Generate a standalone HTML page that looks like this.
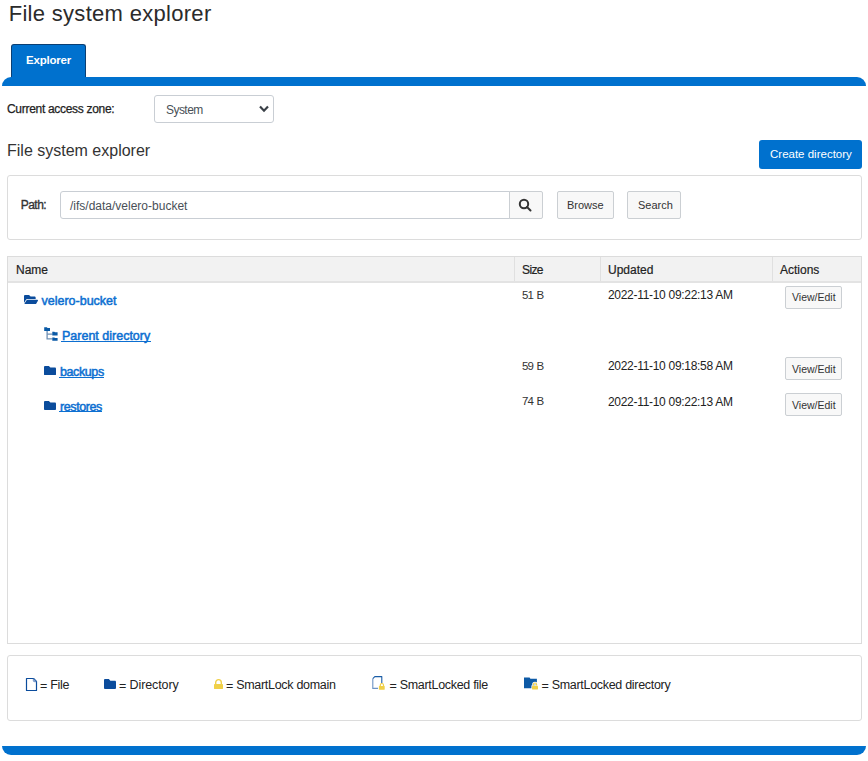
<!DOCTYPE html>
<html><head><meta charset="utf-8">
<style>
*{box-sizing:border-box;margin:0;padding:0}
html,body{width:868px;height:761px;background:#fff;overflow:hidden}
body{position:relative;font-family:"Liberation Sans",sans-serif;color:#212529}
.a{position:absolute;white-space:nowrap;line-height:1}
.bar{position:absolute;background:#0071ce}
.panel{position:absolute;border:1px solid #dcdcdc;border-radius:3px;background:#fff}
.btn{position:absolute;border:1px solid #cbcfd3;border-radius:2px;background:#f8f8f8}
.lnk{color:#0c6fd1;-webkit-text-stroke:0.5px #0c6fd1;font-size:12.5px}
.ic{position:absolute}
</style></head><body>

<div class="a" style="left:8.7px;top:2.5px;font-size:22px;letter-spacing:0.3px;color:#2b2b2b">File system explorer</div>

<!-- tab -->
<div style="position:absolute;left:11px;top:44px;width:75px;height:34px;background:#0071ce;border:1px solid #0b3f73;border-bottom:none;border-radius:3px 3px 0 0"></div>
<div class="a" style="left:26px;top:55px;font-size:11.5px;font-weight:bold;letter-spacing:-0.2px;color:#fff">Explorer</div>
<div class="bar" style="left:2px;top:77px;width:864px;height:9px;border-radius:10px 10px 0 0"></div>

<div class="a" style="left:7px;top:102.8px;font-size:12px;letter-spacing:-0.3px;-webkit-text-stroke:0.25px #222;color:#222">Current access zone:</div>
<div style="position:absolute;left:154px;top:95px;width:120px;height:28px;border:1px solid #c9ced4;border-radius:3px;background:#fff"></div>
<div class="a" style="left:166px;top:104px;font-size:12px;letter-spacing:-0.55px;color:#495057">System</div>
<svg class="ic" style="left:259px;top:105px" width="10" height="8" viewBox="0 0 10 8"><path d="M1 1.5 L5 5.7 L9 1.5" fill="none" stroke="#3a4047" stroke-width="2.2"/></svg>

<div class="a" style="left:7px;top:143px;font-size:16px;color:#333">File system explorer</div>
<div style="position:absolute;left:759px;top:140px;width:103px;height:29px;background:#0071ce;border-radius:3px"></div>
<div class="a" style="left:770px;top:148.5px;font-size:11.5px;color:#fff">Create directory</div>

<!-- path panel -->
<div class="panel" style="left:7px;top:175px;width:855px;height:65px"></div>
<div class="a" style="left:20.7px;top:198.5px;font-size:12px;letter-spacing:-0.5px;-webkit-text-stroke:0.35px #333;color:#333">Path:</div>
<div style="position:absolute;left:60px;top:191px;width:450px;height:28px;border:1px solid #c9ced4;border-radius:3px 0 0 3px;background:#fff"></div>
<div class="a" style="left:70px;top:200px;font-size:12px;color:#495057">/ifs/data/velero-bucket</div>
<div class="btn" style="left:509px;top:191px;width:34px;height:28px;border-radius:0 2px 2px 0"></div>
<svg class="ic" style="left:518px;top:198px" width="14" height="14" viewBox="0 0 14 14"><circle cx="6" cy="6" r="4.2" fill="none" stroke="#333" stroke-width="2"/><path d="M9 9 L12.5 12.5" stroke="#333" stroke-width="2" stroke-linecap="round"/></svg>
<div class="btn" style="left:557px;top:191px;width:57px;height:28px"></div>
<div class="a" style="left:567px;top:199.5px;font-size:11px;color:#333">Browse</div>
<div class="btn" style="left:627px;top:191px;width:54px;height:28px"></div>
<div class="a" style="left:638px;top:199.5px;font-size:11px;color:#333">Search</div>

<!-- table -->
<div class="panel" style="left:7px;top:256px;width:855px;height:388px;border-radius:0"></div>
<div style="position:absolute;left:8px;top:257px;width:853px;height:26px;background:#f2f2f2;border-bottom:2px solid #e3e3e3"></div>
<div style="position:absolute;left:514px;top:257px;width:1px;height:24px;background:#e0e0e0"></div>
<div style="position:absolute;left:600px;top:257px;width:1px;height:24px;background:#e0e0e0"></div>
<div style="position:absolute;left:772px;top:257px;width:1px;height:24px;background:#e0e0e0"></div>
<div class="a" style="left:16px;top:264px;font-size:12px;-webkit-text-stroke:0.2px #222;color:#222">Name</div>
<div class="a" style="left:522px;top:264px;font-size:12px;letter-spacing:-0.6px;-webkit-text-stroke:0.2px #222;color:#222">Size</div>
<div class="a" style="left:608px;top:264px;font-size:12px;-webkit-text-stroke:0.2px #222;color:#222">Updated</div>
<div class="a" style="left:780px;top:264px;font-size:12px;-webkit-text-stroke:0.2px #222;color:#222">Actions</div>


<!-- row1 -->
<svg class="ic" style="left:24px;top:294.5px" width="14" height="9.5" viewBox="0 64 576 384" preserveAspectRatio="none"><path d="M572.694 292.093L500.27 416.248A63.997 63.997 0 0 1 444.989 448H45.025c-18.523 0-30.064-20.093-20.731-36.093l72.424-124.155A64 64 0 0 1 152 256h399.964c18.523 0 30.064 20.093 20.73 36.093zM152 224h328v-48c0-26.51-21.49-48-48-48H272l-64-64H48C21.49 64 0 85.49 0 112v278.046l69.077-118.418C86.214 242.25 117.989 224 152 224z" fill="#0b4c9c"/></svg>
<div class="a lnk" style="left:41.5px;top:295px">velero-bucket</div>
<div class="a" style="left:522px;top:289.6px;font-size:11.5px;letter-spacing:-0.9px;word-spacing:1.2px;color:#333">51 B</div>
<div class="a" style="left:608px;top:288.5px;font-size:12px;letter-spacing:-0.3px;color:#222">2022-11-10 09:22:13 AM</div>
<div class="btn" style="left:785px;top:286px;width:57px;height:22.5px"></div>
<div class="a" style="left:792px;top:292px;font-size:10.5px;color:#333">View/Edit</div>

<!-- row2 parent -->
<svg class="ic" style="left:44px;top:327px" width="14" height="14" viewBox="0 0 14 14">
<path d="M3.1 3.8 V11.9 H8.5 M3.1 7.1 H8.5" fill="none" stroke="#6f90b4" stroke-width="1.3"/>
<path d="M0.2 0.3 H2.8 L3.6 1.1 H6 V4 H0.2 Z" fill="#0a5aa6"/>
<path d="M8.3 4.7 H10.3 L11 5.3 H13.6 V8.6 H8.3 Z" fill="#0a5aa6"/>
<path d="M8.3 10.5 H10.3 L11 11.1 H13.6 V13.8 H8.3 Z" fill="#0a5aa6"/>
</svg>
<div class="a lnk" style="left:62px;top:329.8px">Parent directory</div>
<div style="position:absolute;left:61px;top:340.6px;width:90px;height:1.2px;background:#0c6fd1"></div>

<!-- row3 backups -->
<svg class="ic" style="left:44px;top:365.7px" width="12" height="9.4" viewBox="0 64 512 384" preserveAspectRatio="none"><path d="M464 128H272l-64-64H48C21.49 64 0 85.49 0 112v288c0 26.51 21.49 48 48 48h416c26.51 0 48-21.49 48-48V176c0-26.51-21.49-48-48-48z" fill="#0b4c9c"/></svg>
<div class="a lnk" style="left:60px;top:365.8px;letter-spacing:-0.4px">backups</div>
<div style="position:absolute;left:59px;top:376.6px;width:45px;height:1.2px;background:#0c6fd1"></div>
<div class="a" style="left:522px;top:360.6px;font-size:11.5px;letter-spacing:-0.9px;word-spacing:1.2px;color:#333">59 B</div>
<div class="a" style="left:608px;top:359.5px;font-size:12px;letter-spacing:-0.3px;color:#222">2022-11-10 09:18:58 AM</div>
<div class="btn" style="left:785px;top:357px;width:57px;height:22.5px"></div>
<div class="a" style="left:792px;top:363.5px;font-size:10.5px;color:#333">View/Edit</div>

<!-- row4 restores -->
<svg class="ic" style="left:44px;top:401.3px" width="12" height="9.2" viewBox="0 64 512 384" preserveAspectRatio="none"><path d="M464 128H272l-64-64H48C21.49 64 0 85.49 0 112v288c0 26.51 21.49 48 48 48h416c26.51 0 48-21.49 48-48V176c0-26.51-21.49-48-48-48z" fill="#0b4c9c"/></svg>
<div class="a lnk" style="left:60px;top:400.5px;letter-spacing:-0.4px">restores</div>
<div style="position:absolute;left:59px;top:411.3px;width:43px;height:1.2px;background:#0c6fd1"></div>
<div class="a" style="left:522px;top:396.4px;font-size:11.5px;letter-spacing:-0.9px;word-spacing:1.2px;color:#333">74 B</div>
<div class="a" style="left:608px;top:395.5px;font-size:12px;letter-spacing:-0.3px;color:#222">2022-11-10 09:22:13 AM</div>
<div class="btn" style="left:785px;top:393px;width:57px;height:22.5px"></div>
<div class="a" style="left:792px;top:399.5px;font-size:10.5px;color:#333">View/Edit</div>

<!-- legend -->
<div class="panel" style="left:7px;top:655px;width:855px;height:66px"></div>
<svg class="ic" style="left:25px;top:677px" width="13" height="15" viewBox="0 0 13 15">
<path d="M1.5 1.5 H8.6 L11.5 4.4 V13.5 H1.5 Z" fill="none" stroke="#0b4c9c" stroke-width="1.2" stroke-linejoin="round"/>
<path d="M8.3 1.8 V3.6 Q8.3 4.7 9.4 4.7 H11.3 Z" fill="#8aa6d0" stroke="#5f86bf" stroke-width="0.8"/>
</svg>
<div class="a" style="left:40px;top:678.5px;font-size:12.5px;letter-spacing:-0.3px;color:#222"><span style="position:relative;top:1px">=</span> File</div>

<svg class="ic" style="left:104px;top:679px" width="12" height="10" viewBox="0 64 512 384" preserveAspectRatio="none"><path d="M464 128H272l-64-64H48C21.49 64 0 85.49 0 112v288c0 26.51 21.49 48 48 48h416c26.51 0 48-21.49 48-48V176c0-26.51-21.49-48-48-48z" fill="#0b4c9c"/></svg>
<div class="a" style="left:119px;top:678.5px;font-size:12.5px;letter-spacing:-0.1px;color:#222"><span style="position:relative;top:1px">=</span> Directory</div>

<svg class="ic" style="left:213px;top:678px" width="11" height="12" viewBox="0 0 11 12">
<path d="M2.7 6.3 V4.4 A2.8 2.8 0 0 1 8.3 4.4 V6.3" fill="none" stroke="#f0d048" stroke-width="1.4"/>
<rect x="1" y="6" width="9" height="5" rx="0.4" fill="#f0d048"/>
</svg>
<div class="a" style="left:226px;top:678.5px;font-size:12.5px;letter-spacing:-0.3px;color:#222"><span style="position:relative;top:1px">=</span> SmartLock domain</div>

<svg class="ic" style="left:371px;top:675px" width="15" height="15" viewBox="0 0 15 15">
<path d="M1.8 3.6 L3.8 1.6 H10.8 V8.2" fill="none" stroke="#1a5da6" stroke-width="1.1" stroke-linejoin="round"/>
<path d="M1.8 3.6 V13.4 H7" fill="none" stroke="#6c93c4" stroke-width="1.1"/>
<path d="M9.3 11 V10.1 A1.6 1.6 0 0 1 12.5 10.1 V11" fill="none" stroke="#f0d048" stroke-width="1.2"/>
<rect x="7.9" y="10.9" width="5.8" height="3.8" rx="0.4" fill="#f0d048"/>
</svg>
<div class="a" style="left:389.5px;top:678.5px;font-size:12.5px;letter-spacing:-0.3px;color:#222"><span style="position:relative;top:1px">=</span> SmartLocked file</div>

<svg class="ic" style="left:524px;top:676.5px" width="15" height="14" viewBox="0 0 15 14">
<path d="M0 0.4 H5.6 L6.4 1.7 H12.9 V7 L9.2 11.2 H0 Z" fill="#0d5aa6"/>
<path d="M9.4 8.6 V7.6 A1.6 1.6 0 0 1 12.6 7.6 V8.6" fill="none" stroke="#fff" stroke-width="2.4"/>
<rect x="7.4" y="8.3" width="6.6" height="4.6" rx="0.5" fill="#fff"/>
<path d="M9.4 8.6 V7.6 A1.6 1.6 0 0 1 12.6 7.6 V8.6" fill="none" stroke="#f0d048" stroke-width="1.2"/>
<rect x="8" y="8.8" width="6" height="3.6" rx="0.4" fill="#f0d048"/>
</svg>
<div class="a" style="left:541.5px;top:678.5px;font-size:12.5px;letter-spacing:-0.3px;color:#222"><span style="position:relative;top:1px">=</span> SmartLocked directory</div>

<div class="bar" style="left:2px;top:746px;width:864px;height:9px;border-radius:0 0 10px 10px"></div>
</body></html>
